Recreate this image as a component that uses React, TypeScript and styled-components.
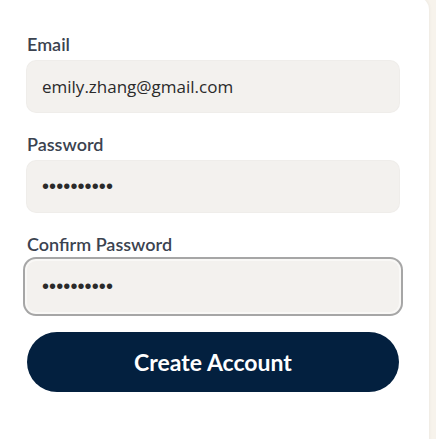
import React from "react";
import styled, { createGlobalStyle } from "styled-components";

const Global = createGlobalStyle`
  html, body {
    margin: 0;
    padding: 0;
    background: #f7f3ec;
    font-family: "Open Sans", "Noto Sans", sans-serif;
  }
  * { box-sizing: border-box; }
`;

const Page = styled.div`
  width: 436px;
  height: 439px;
  overflow: hidden;
  background: #f7f3ec;
`;

const Card = styled.form`
  width: 429px;
  height: 460px;
  margin-top: -4px;
  background: #ffffff;
  border-radius: 0 14px 14px 0;
  box-shadow: 1px 0 3px rgba(0, 0, 0, 0.04);
  padding: 36px 30px 0 27px;
  display: flex;
  flex-direction: column;
`;

const Field = styled.div`
  display: flex;
  flex-direction: column;
  margin-bottom: 20px;
`;

const Label = styled.label`
  font-family: Lato, "Open Sans", sans-serif;
  font-size: 18px;
  font-weight: 600;
  line-height: 24px;
  color: #3b4350;
  margin-bottom: 5px;
`;

const Input = styled.input<{ $focused?: boolean; $secret?: boolean }>`
  width: 100%;
  height: 51px;
  border: none;
  border-radius: 9px;
  background: #f3f1ee;
  padding: 0 15px;
  font-family: ${(p) =>
    p.$secret ? '"Liberation Sans", Arial, sans-serif' : '"Open Sans", "Noto Sans", sans-serif'};
  font-size: ${(p) => (p.$secret ? "20px" : "17px")};
  letter-spacing: ${(p) => (p.$secret ? "0.1px" : "0")};
  color: #2a2a2a;
  outline: none;
  box-shadow: ${(p) =>
    p.$focused
      ? "0 0 0 2px #f9f8f6, 0 0 0 4px #a6a6a6"
      : "0 0 0 1px #efedea"};
`;

const Button = styled.button`
  height: 60px;
  width: 100%;
  border: none;
  border-radius: 30px;
  background: #03203f;
  color: #ffffff;
  font-family: Lato, "Open Sans", sans-serif;
  font-size: 23px;
  font-weight: 700;
  cursor: pointer;
`;

export default function App() {
  return (
    <Page>
      <Global />
      <Card onSubmit={(e) => e.preventDefault()}>
        <Field>
          <Label>Email</Label>
          <Input readOnly defaultValue="emily.zhang@gmail.com" />
        </Field>
        <Field>
          <Label>Password</Label>
          <Input $secret type="password" readOnly defaultValue="abcdefghij" />
        </Field>
        <Field>
          <Label>Confirm Password</Label>
          <Input $focused $secret type="password" readOnly defaultValue="abcdefghij" />
        </Field>
        <Button type="submit">Create Account</Button>
      </Card>
    </Page>
  );
}
